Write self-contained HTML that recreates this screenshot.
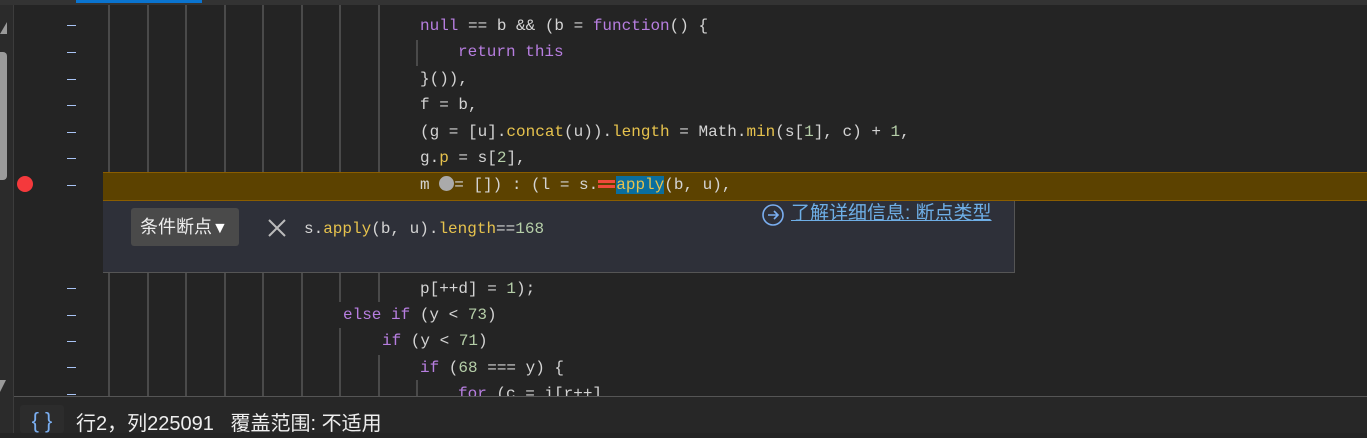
<!DOCTYPE html>
<html><head><meta charset="utf-8"><style>
body{margin:0;width:1367px;height:433px;background:#242424;overflow:hidden;position:relative;font-family:"Liberation Mono",monospace;}
.a{position:absolute}
.ln{position:absolute;height:26px;line-height:26px;font-size:16px;color:#d4d4d4;white-space:pre;}
.k{color:#b77ee0}.f{color:#e6c24d}.n{color:#b5cea8}
.g{position:absolute;width:2px;background:#4a4a4a}
.d{position:absolute;left:67px;width:9px;height:1px;background:#a9c4f5}
</style></head><body>
<div class="a" style="left:0;top:0;width:1367px;height:5px;background:#333"></div>
<div class="a" style="left:76px;top:0;width:126px;height:3px;background:#0a74d0"></div>
<div class="a" style="left:0;top:5px;width:13px;height:428px;background:#2b2b2b"></div>
<div class="a" style="left:13px;top:5px;width:1px;height:428px;background:#3c3c3c"></div>
<div class="a" style="left:0;top:52px;width:7px;height:128px;background:#9a9a9a;border-radius:0 4px 4px 0"></div>
<div class="a" style="left:0;top:22px;width:0;height:0;border-left:7px solid transparent;border-bottom:12px solid #9a9a9a"></div>
<div class="a" style="left:0;top:380px;width:0;height:0;border-right:6px solid transparent;border-top:12px solid #9a9a9a"></div>
<div class="g" style="left:108px;top:5px;height:391px"></div>
<div class="g" style="left:147px;top:5px;height:391px"></div>
<div class="g" style="left:185px;top:5px;height:391px"></div>
<div class="g" style="left:224px;top:5px;height:391px"></div>
<div class="g" style="left:262px;top:5px;height:391px"></div>
<div class="g" style="left:301px;top:5px;height:391px"></div>
<div class="g" style="left:339px;top:5px;height:297px"></div>
<div class="g" style="left:339px;top:328px;height:68px"></div>
<div class="g" style="left:378px;top:5px;height:297px"></div>
<div class="g" style="left:378px;top:355px;height:41px"></div>
<div class="g" style="left:416px;top:40px;height:26px"></div>
<div class="g" style="left:416px;top:380px;height:16px"></div>
<div class="d" style="top:25px"></div><div class="d" style="top:52px"></div><div class="d" style="top:79px"></div><div class="d" style="top:105px"></div><div class="d" style="top:132px"></div><div class="d" style="top:158px"></div><div class="d" style="top:185px"></div><div class="d" style="top:288px"></div><div class="d" style="top:315px"></div><div class="d" style="top:341px"></div><div class="d" style="top:367px"></div><div class="d" style="top:394px"></div>
<div class="a" style="left:103px;top:172px;width:1264px;height:27px;background:#5c4200;border-top:1px solid #8a5d00;border-bottom:1px solid #8a5d00"></div>
<div class="a" style="left:17px;top:176px;width:16px;height:16px;border-radius:50%;background:#f4393c"></div>
<div class="ln" style="left:420px;top:13px"><span class="k">null</span> == b &amp;&amp; (b = <span class="k">function</span>() {</div>
<div class="ln" style="left:458px;top:39px"><span class="k">return this</span></div>
<div class="ln" style="left:420px;top:66px">}()),</div>
<div class="ln" style="left:420px;top:92px">f = b,</div>
<div class="ln" style="left:420px;top:119px">(g = [u].<span class="f">concat</span>(u)).<span class="f">length</span> = Math.<span class="f">min</span>(s[<span class="n">1</span>], c) + <span class="n">1</span>,</div>
<div class="ln" style="left:420px;top:145px">g.<span class="f">p</span> = s[<span class="n">2</span>],</div>
<div class="ln" style="left:420px;top:172px">m <span style="display:inline-block;width:15px;height:15px;border-radius:50%;background:#aaa;vertical-align:-2px"></span>= []) : (l = s.<span style="display:inline-block;width:17px;height:8px;border-top:3px solid #f04a3a;border-bottom:3px solid #f04a3a;box-sizing:border-box;vertical-align:1px;margin-right:1px"></span><span class="f" style="background:#0a6e9e">apply</span>(b, u),</div>
<div class="ln" style="left:420px;top:276px">p[++d] = <span class="n">1</span>);</div>
<div class="ln" style="left:343px;top:302px"><span class="k">else if</span> (y &lt; <span class="n">73</span>)</div>
<div class="ln" style="left:382px;top:328px"><span class="k">if</span> (y &lt; <span class="n">71</span>)</div>
<div class="ln" style="left:420px;top:355px"><span class="k">if</span> (<span class="n">68</span> === y) {</div>
<div class="ln" style="left:458px;top:381px"><span class="k">for</span> (c = i[r++]</div>
<div class="a" style="left:103px;top:201px;width:911px;height:71px;background:#2e3039;border-right:1px solid #555;border-bottom:1px solid #555"></div>
<div class="a" style="left:131px;top:208px;width:108px;height:38px;background:#4a4a4a;border-radius:3px;color:#eee;font:18px 'Liberation Sans','Noto Sans CJK SC',sans-serif;line-height:38px;text-indent:9px;white-space:nowrap">条件断点<span style="font-size:16px;color:#fff">▼</span></div>
<svg class="a" style="left:266px;top:217px" width="22" height="22"><path d="M3 3L19 19M19 3L3 19" stroke="#bbb" stroke-width="2"/></svg>
<div class="ln" style="left:304px;top:216px">s.<span class="f">apply</span>(b, u).<span class="f">length</span>==<span class="n">168</span></div>
<svg class="a" style="left:761px;top:203px" width="24" height="24"><circle cx="12" cy="12" r="10" fill="none" stroke="#7aaef0" stroke-width="1.6"/><path d="M7 12H17M13 8L17 12L13 16" fill="none" stroke="#7aaef0" stroke-width="1.6"/></svg>
<div class="a" style="left:791px;top:201px;color:#6eaee6;font:19px 'Liberation Sans','Noto Sans CJK SC',sans-serif;line-height:26px;text-decoration:underline;white-space:nowrap">了解详细信息: 断点类型</div>
<div class="a" style="left:14px;top:396px;width:1353px;height:1px;background:#555"></div>
<div class="a" style="left:14px;top:397px;width:1353px;height:36px;background:#272727"></div>
<div class="a" style="left:20px;top:405px;width:44px;height:28px;background:#2c2c2c;border-radius:3px;color:#7aaef0;font:22px 'Liberation Sans',sans-serif;text-align:center;line-height:32px">{ }</div>
<div class="a" style="left:76px;top:410px;color:#eee;font:20px 'Liberation Sans','Noto Sans CJK SC',sans-serif;line-height:28px;white-space:pre">行2，列225091   覆盖范围: 不适用</div>
</body></html>
